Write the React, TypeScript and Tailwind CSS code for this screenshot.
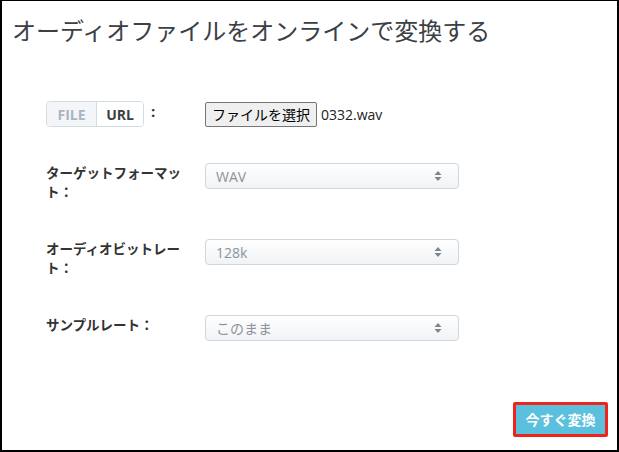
import React from "react";

const jp = "font-['Open_Sans','Noto_Sans_CJK_JP',sans-serif]";

const Arrows: React.FC = () => (
  <svg width="8" height="12" viewBox="0 0 8 12" className="shrink-0">
    <path d="M4 1 L7.5 5 L0.5 5 Z" fill="#7b8591" />
    <path d="M4 11 L7.5 7 L0.5 7 Z" fill="#7b8591" />
  </svg>
);

const FakeSelect: React.FC<{ value: string }> = ({ value }) => (
  <div className="w-[254px] h-[26px] flex items-center justify-between pl-[10px] pr-[16px] rounded-[4px] border border-[#cdd7e1] bg-gradient-to-b from-white to-[#f1f3f5] text-[14px] text-[#8b939c]">
    <span>{value}</span>
    <Arrows />
  </div>
);

const Row: React.FC<{ label: string; value: string; className?: string }> = ({
  label,
  value,
  className,
}) => (
  <div className={`flex items-start ${className ?? ""}`}>
    <div className="w-[159px] shrink-0 pt-[1px]">
      <div className="w-[140px] text-[13.5px] font-bold leading-[19px] text-[#333]">
        {label}
      </div>
    </div>
    <FakeSelect value={value} />
  </div>
);

export default function App() {
  return (
    <div
      className={`w-[619px] h-[452px] bg-white border-l-2 border-r-2 border-b-2 border-t border-black flex flex-col ${jp}`}
    >
      {/* Title */}
      <h1 className="pl-[10px] pt-[13px] text-[24px] leading-[34px] font-normal text-[#3b4046]">
        オーディオファイルをオンラインで変換する
      </h1>

      <div className="pl-[44px] mt-[53px] flex flex-col">
        {/* File / URL */}
        <div className="flex items-center h-[26px]">
          <div className="w-[159px] shrink-0 flex items-center">
            <div className="flex h-[26px] rounded-[4px] border border-[#d3dbe3] overflow-hidden text-[14px] font-bold">
              <span className="w-[50px] flex items-center justify-center bg-[#f3f5f8] text-[#a9b5c3] border-r border-[#d3dbe3]">
                FILE
              </span>
              <span className="w-[46px] flex items-center justify-center bg-white text-[#3a3f45]">
                URL
              </span>
            </div>
            <span className="ml-[7px] text-[15px] font-bold text-[#333] -mt-[6px]">
              :
            </span>
          </div>
          <div className="flex items-center">
            <span className="h-[25px] px-[6px] flex items-center bg-[#efefef] border border-[#767676] rounded-[2px] text-[14px] text-black font-['Noto_Sans_CJK_JP',sans-serif]">
              ファイルを選択
            </span>
            <span className="ml-[4px] text-[14px] text-[#222]">0332.wav</span>
          </div>
        </div>

        <Row label="ターゲットフォーマット：" value="WAV" className="mt-[36px]" />
        <Row label="オーディオビットレート：" value="128k" className="mt-[37px]" />
        <Row label="サンプルレート：" value="このまま" className="mt-[37px]" />
      </div>

      <div className="mt-auto mb-[13px] mr-[9px] flex justify-end">
        <div className="border-[3px] border-[#f0231b] rounded-[2px]">
          <button className="w-[89px] h-[29px] bg-[#5bc0de] text-white text-[14px] font-bold flex items-center justify-center">
            今すぐ変換
          </button>
        </div>
      </div>
    </div>
  );
}
